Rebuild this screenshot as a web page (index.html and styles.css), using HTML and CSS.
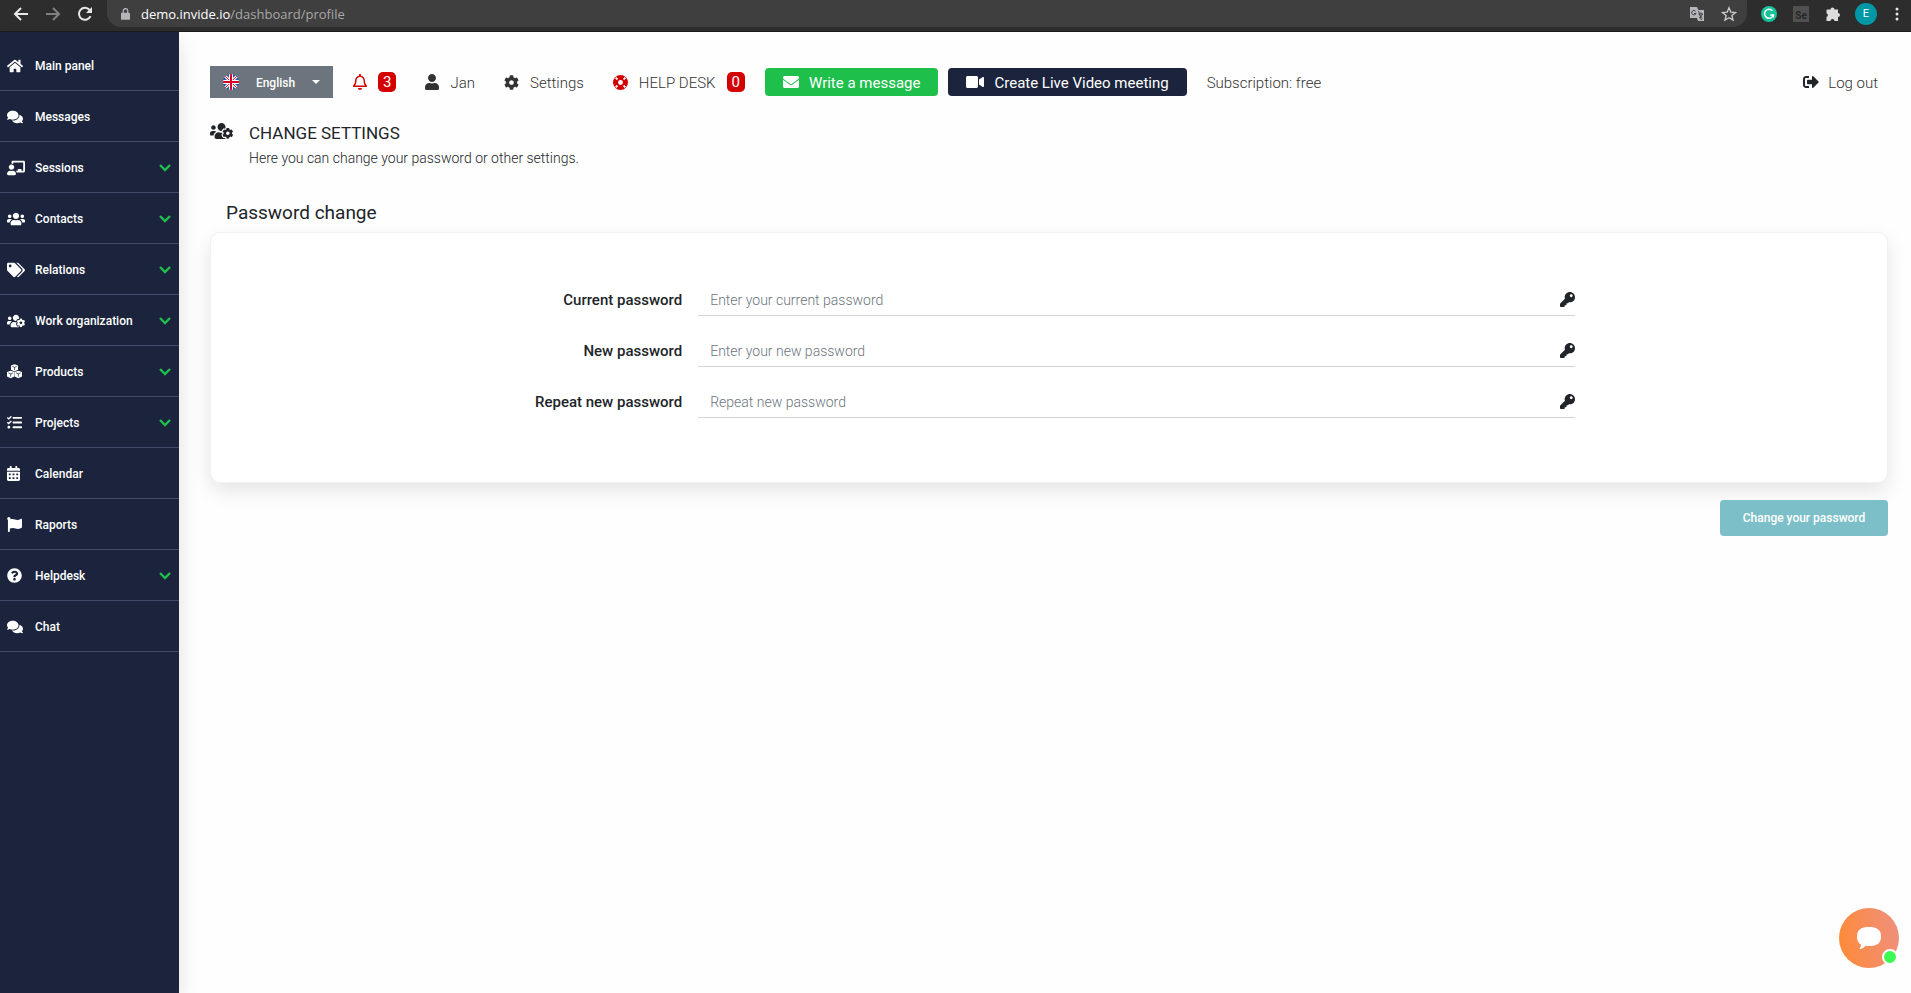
FILE: index.html
```html
<!DOCTYPE html>
<html lang="en">
<head>
    <meta charset="UTF-8">
    <meta name="viewport" content="width=device-width, initial-scale=1.0">
    <title>Change settings</title>
    <link rel="stylesheet" href="styles.css">
</head>
<body>
    <!-- icons -->
    <svg class="sprite" aria-hidden="true">
        <symbol id="home" viewBox="0 0 576 512"><path d="M280.37 148.26L96 300.11V464a16 16 0 0 0 16 16l112.06-.29a16 16 0 0 0 15.92-16V368a16 16 0 0 1 16-16h64a16 16 0 0 1 16 16v95.64a16 16 0 0 0 16 16.05L464 480a16 16 0 0 0 16-16V300L295.67 148.26a12.19 12.19 0 0 0-15.3 0zM571.6 251.47L488 182.56V44.05a12 12 0 0 0-12-12h-56a12 12 0 0 0-12 12v72.61L318.47 43a48 48 0 0 0-61 0L4.34 251.47a12 12 0 0 0-1.6 16.9l25.5 31A12 12 0 0 0 45.15 301l235.22-193.74a12.19 12.19 0 0 1 15.3 0L530.9 301a12 12 0 0 0 16.9-1.6l25.5-31a12 12 0 0 0-1.7-16.93z"/></symbol>
        <symbol id="comments" viewBox="0 0 576 512"><path d="M416 192c0-88.4-93.1-160-208-160S0 103.6 0 192c0 34.3 14.1 65.9 38 92-13.4 30.2-35.5 54.2-35.8 54.5-2.2 2.3-2.8 5.7-1.5 8.7S4.8 352 8 352c36.6 0 66.9-12.3 88.7-25 32.2 15.7 70.3 25 111.3 25 114.9 0 208-71.6 208-160zm122 220c23.9-26 38-57.7 38-92 0-66.9-53.5-124.2-129.3-148.1.9 6.6 1.3 13.3 1.3 20.1 0 105.9-107.7 192-240 192-10.8 0-21.3-.8-31.7-1.9C207.8 439.6 281.8 480 368 480c41 0 79.1-9.2 111.3-25 21.8 12.7 52.1 25 88.7 25 3.2 0 6.1-1.9 7.3-4.8 1.3-2.9.7-6.3-1.5-8.7-.3-.3-22.4-24.2-35.8-54.5z"/></symbol>
        <symbol id="teacher" viewBox="0 0 640 512"><path d="M208 352c-2.39 0-4.78.35-7.06 1.09C187.98 357.3 174.35 360 160 360c-14.35 0-27.98-2.7-40.95-6.91-2.28-.74-4.66-1.09-7.05-1.09C49.94 352-.33 402.48 0 464.62.14 490.88 21.73 512 48 512h224c26.27 0 47.86-21.12 48-47.38.33-62.14-49.94-112.62-112-112.62zm-48-32c53.02 0 96-42.98 96-96s-42.98-96-96-96-96 42.98-96 96 42.98 96 96 96zM592 0H208c-26.47 0-48 22.25-48 49.59V96c23.42 0 45.1 6.78 64 17.8V64h352v288h-64v-64H384v64h-76.24c19.1 16.69 33.12 38.73 39.69 64H592c26.47 0 48-22.25 48-49.59V49.59C640 22.25 618.47 0 592 0z"/></symbol>
        <symbol id="users" viewBox="0 0 640 512"><path d="M96 224c35.3 0 64-28.7 64-64s-28.7-64-64-64-64 28.7-64 64 28.7 64 64 64zm448 0c35.3 0 64-28.7 64-64s-28.7-64-64-64-64 28.7-64 64 28.7 64 64 64zm32 32h-64c-17.6 0-33.5 7.1-45.1 18.6 40.3 22.1 68.9 62 75.1 109.4h66c17.7 0 32-14.3 32-32v-32c0-35.3-28.7-64-64-64zm-256 0c61.9 0 112-50.1 112-112S381.9 32 320 32 208 82.1 208 144s50.1 112 112 112zm76.8 32h-8.3c-20.8 10-43.9 16-68.5 16s-47.6-6-68.5-16h-8.3C179.6 288 128 339.6 128 403.2V432c0 26.5 21.5 48 48 48h288c26.5 0 48-21.5 48-48v-28.8c0-63.6-51.6-115.2-115.2-115.2zm-223.7-13.4C161.5 263.1 145.6 256 128 256H64c-35.3 0-64 28.7-64 64v32c0 17.7 14.3 32 32 32h65.9c6.3-47.4 34.9-87.3 75.2-109.4z"/></symbol>
        <symbol id="tags" viewBox="0 0 640 512"><path d="M497.941 225.941L286.059 14.059A48 48 0 0 0 252.118 0H48C21.49 0 0 21.49 0 48v204.118a48 48 0 0 0 14.059 33.941l211.882 211.882c18.744 18.745 49.136 18.746 67.882 0l204.118-204.118c18.745-18.745 18.745-49.137 0-67.882zM112 160c-26.51 0-48-21.49-48-48s21.49-48 48-48 48 21.49 48 48-21.49 48-48 48zm513.941 133.823L421.823 497.941c-18.745 18.745-49.137 18.745-67.882 0l-.36-.36L527.64 323.522c16.999-16.999 26.36-39.6 26.36-63.64s-9.362-46.641-26.36-63.64L331.397 0h48.721a48 48 0 0 1 33.941 14.059l211.882 211.882c18.745 18.745 18.745 49.137 0 67.882z"/></symbol>
        <symbol id="users-cog" viewBox="0 0 640 512"><path d="M610.5 341.3c2.6-14.1 2.6-28.5 0-42.6l25.8-14.9c3-1.7 4.3-5.2 3.3-8.5-6.7-21.6-18.2-41.2-33.2-57.4-2.3-2.5-6-3.1-9-1.4l-25.8 14.9c-10.9-9.3-23.4-16.5-36.9-21.3v-29.8c0-3.4-2.4-6.4-5.7-7.1-22.3-5-45-4.8-66.2 0-3.3.7-5.7 3.7-5.7 7.1v29.8c-13.5 4.8-26 12-36.9 21.3l-25.8-14.9c-2.9-1.7-6.7-1.1-9 1.4-15 16.2-26.5 35.8-33.2 57.4-1 3.3.4 6.8 3.3 8.5l25.8 14.9c-2.6 14.1-2.6 28.5 0 42.6l-25.8 14.9c-3 1.7-4.3 5.2-3.3 8.5 6.7 21.6 18.2 41.1 33.2 57.4 2.3 2.5 6 3.1 9 1.4l25.8-14.9c10.9 9.3 23.4 16.5 36.9 21.3v29.8c0 3.4 2.4 6.4 5.7 7.1 22.3 5 45 4.8 66.2 0 3.3-.7 5.7-3.7 5.7-7.1v-29.8c13.5-4.8 26-12 36.9-21.3l25.8 14.9c2.9 1.7 6.7 1.1 9-1.4 15-16.2 26.5-35.8 33.2-57.4 1-3.3-.4-6.8-3.3-8.5l-25.8-14.9zM496 368.5c-26.8 0-48.5-21.8-48.5-48.5s21.8-48.5 48.5-48.5 48.5 21.8 48.5 48.5-21.7 48.5-48.5 48.5zM96 224c35.3 0 64-28.7 64-64s-28.7-64-64-64-64 28.7-64 64 28.7 64 64 64zm224 32c1.9 0 3.7-.5 5.6-.6 8.3-21.7 20.5-42.1 36.3-59.2 7.4-8 17.9-12.6 28.9-12.6 6.9 0 13.7 1.8 19.6 5.3l7.9 4.6c.8-.5 1.6-.9 2.4-1.4 7-14.6 11.2-30.8 11.2-48 0-61.9-50.1-112-112-112S208 82.1 208 144c0 61.9 50.1 112 112 112zm105.2 194.5c-2.3-1.2-4.6-2.6-6.8-3.9-8.2 4.8-15.3 9.8-27.5 9.8-10.9 0-21.4-4.6-28.9-12.6-18.3-19.8-32.3-43.9-40.2-69.6-10.7-34.5 24.9-49.7 25.8-50.3-.1-2.6-.1-5.2 0-7.8l-7.9-4.6c-3.8-2.2-7-5-9.8-8.1-3.3.2-6.5.6-9.8.6-24.6 0-47.6-6-68.5-16h-8.3C179.6 288 128 339.6 128 403.2V432c0 26.5 21.5 48 48 48h255.4c-3.7-6-6.2-12.8-6.2-20.3v-9.2zM173.1 274.6C161.5 263.1 145.6 256 128 256H64c-35.3 0-64 28.7-64 64v32c0 17.7 14.3 32 32 32h65.9c6.3-47.4 34.9-87.3 75.2-109.4z"/></symbol>
        <symbol id="cubes" viewBox="0 0 512 512">
            <path d="M256 10l120 44v146l-120 56-120-56V54zM126 228l124 48v152l-124 62L0 428V276zM386 228l126 48v152l-126 62-124-62V276z"/>
            <path d="M180 84l76 30 76-30M256 114v90M46 304l80 32 80-32M126 336v96M306 304l80 32 80-32M386 336v96" fill="none" stroke="#1b243c" stroke-width="24"/>
        </symbol>
        <symbol id="tasks" viewBox="0 0 512 512"><path d="M139.61 35.5a12 12 0 0 0-17 0L58.93 98.81l-22.7-22.12a12 12 0 0 0-17 0L3.53 92.41a12 12 0 0 0 0 17l47.59 47.4a12.78 12.78 0 0 0 17.61 0l15.59-15.62L156.52 69a12.09 12.09 0 0 0 .09-17zm0 159.19a12 12 0 0 0-17 0l-63.68 63.72-22.7-22.1a12 12 0 0 0-17 0L3.53 252a12 12 0 0 0 0 17L51 316.5a12.77 12.77 0 0 0 17.6 0l15.7-15.69 72.2-72.22a12 12 0 0 0 .09-16.9zM64 368c-26.49 0-48.59 21.5-48.59 48S37.53 464 64 464a48 48 0 0 0 0-96zm432 16H208a16 16 0 0 0-16 16v32a16 16 0 0 0 16 16h288a16 16 0 0 0 16-16v-32a16 16 0 0 0-16-16zm0-320H208a16 16 0 0 0-16 16v32a16 16 0 0 0 16 16h288a16 16 0 0 0 16-16V80a16 16 0 0 0-16-16zm0 160H208a16 16 0 0 0-16 16v32a16 16 0 0 0 16 16h288a16 16 0 0 0 16-16v-32a16 16 0 0 0-16-16z"/></symbol>
        <symbol id="calendar" viewBox="0 0 448 512"><path fill-rule="evenodd" d="M0 464c0 26.5 21.5 48 48 48h352c26.5 0 48-21.5 48-48V192H0zM64 256h64v64H64zM192 256h64v64h-64zM320 256h64v64h-64zM64 384h64v64H64zM192 384h64v64h-64zM320 384h64v64h-64zM400 64h-48V16c0-8.8-7.2-16-16-16h-32c-8.8 0-16 7.2-16 16v48H160V16c0-8.8-7.2-16-16-16h-32c-8.8 0-16 7.2-16 16v48H48C21.5 64 0 85.5 0 112v48h448v-48c0-26.5-21.5-48-48-48z"/></symbol>
        <symbol id="flag" viewBox="0 0 512 512"><path d="M349.565 98.783C295.978 98.783 251.721 64 184.348 64c-24.955 0-47.309 4.384-68.045 12.013a55.947 55.947 0 0 0 3.586-23.562C118.117 24.015 94.806 1.206 66.338.048 34.345-1.254 8 24.296 8 56c0 19.026 9.497 35.825 24 45.945V488c0 13.255 10.745 24 24 24h16c13.255 0 24-10.745 24-24v-94.4c28.311-12.064 63.582-22.122 114.435-22.122 53.588 0 97.844 34.783 165.217 34.783 48.169 0 86.667-16.294 122.505-40.858C506.84 359.452 512 349.571 512 339.045v-243.1c0-23.393-24.269-38.87-45.485-29.016-34.338 15.948-76.454 31.854-116.95 31.854z"/></symbol>
        <symbol id="question" viewBox="0 0 512 512"><path d="M504 256c0 136.997-111.043 248-248 248S8 392.997 8 256C8 119.083 119.043 8 256 8s248 111.083 248 248zM262.655 90c-54.497 0-89.255 22.957-116.549 63.758-3.536 5.286-2.353 12.415 2.715 16.258l34.699 26.31c5.205 3.947 12.621 3.008 16.665-2.122 17.864-22.658 30.113-35.797 57.303-35.797 20.429 0 45.698 13.148 45.698 32.958 0 14.976-12.363 22.667-32.534 33.976C247.128 238.528 216 254.941 216 296v4c0 6.627 5.373 12 12 12h56c6.627 0 12-5.373 12-12v-1.333c0-28.462 83.186-29.647 83.186-106.667 0-58.002-60.165-102-116.531-102zM256 338c-25.365 0-46 20.635-46 46 0 25.364 20.635 46 46 46s46-20.636 46-46c0-25.365-20.635-46-46-46z"/></symbol>
        <symbol id="chevron" viewBox="0 0 12 8"><path d="M1 1l5 5 5-5" fill="none" stroke="currentColor" stroke-width="2.4"/></symbol>
        <symbol id="bell" viewBox="0 0 448 512"><path d="M439.39 362.29c-19.32-20.76-55.47-51.99-55.47-154.29 0-77.7-54.48-139.9-127.94-155.16V32c0-17.67-14.32-32-31.98-32s-31.98 14.33-31.98 32v20.84C118.56 68.1 64.08 130.3 64.08 208c0 102.3-36.15 133.53-55.47 154.29-6 6.45-8.66 14.16-8.61 21.71.11 16.4 12.98 32 32.1 32h383.8c19.12 0 32-15.6 32.1-32 .05-7.55-2.61-15.27-8.61-21.71zM67.53 368c21.22-27.97 44.42-74.33 44.53-159.42 0-.2-.06-.38-.06-.58 0-61.86 50.14-112 112-112s112 50.14 112 112c0 .2-.06.38-.06.58.11 85.1 23.31 131.46 44.53 159.42H67.53zM224 512c35.32 0 63.97-28.65 63.97-64H160.03c0 35.35 28.65 64 63.97 64z"/></symbol>
        <symbol id="user" viewBox="0 0 448 512"><path d="M224 256c70.7 0 128-57.3 128-128S294.7 0 224 0 96 57.3 96 128s57.3 128 128 128zm89.6 32h-16.7c-22.2 10.2-46.9 16-72.9 16s-50.6-5.8-72.9-16h-16.7C60.2 288 0 348.2 0 422.4V464c0 26.5 21.5 48 48 48h352c26.5 0 48-21.5 48-48v-41.6c0-74.2-60.2-134.4-134.4-134.4z"/></symbol>
        <symbol id="cog" viewBox="0 0 512 512"><path d="M487.4 315.7l-42.6-24.6c4.3-23.2 4.3-47 0-70.2l42.6-24.6c4.9-2.8 7.1-8.6 5.5-14-11.1-35.6-30-67.8-54.7-94.6-3.8-4.1-10-5.1-14.8-2.3L380.8 110c-17.9-15.4-38.5-27.3-60.8-35.1V25.8c0-5.6-3.9-10.5-9.4-11.7-36.7-8.2-74.3-7.8-109.2 0-5.5 1.2-9.4 6.1-9.4 11.7V75c-22.2 7.9-42.8 19.8-60.8 35.1L88.7 85.5c-4.9-2.8-11-1.9-14.8 2.3-24.7 26.7-43.6 58.9-54.7 94.6-1.7 5.4.6 11.2 5.5 14L67.3 221c-4.3 23.2-4.3 47 0 70.2l-42.6 24.6c-4.9 2.8-7.1 8.6-5.5 14 11.1 35.6 30 67.8 54.7 94.6 3.8 4.1 10 5.1 14.8 2.3l42.6-24.6c17.9 15.4 38.5 27.3 60.8 35.1v49.2c0 5.6 3.9 10.5 9.4 11.7 36.7 8.2 74.3 7.8 109.2 0 5.5-1.2 9.4-6.1 9.4-11.7v-49.2c22.2-7.9 42.8-19.8 60.8-35.1l42.6 24.6c4.9 2.8 11 1.9 14.8-2.3 24.7-26.7 43.6-58.9 54.7-94.6 1.5-5.5-.7-11.3-5.6-14.1zM256 336c-44.1 0-80-35.9-80-80s35.9-80 80-80 80 35.9 80 80-35.9 80-80 80z"/></symbol>
        <symbol id="ring" viewBox="0 0 16 16">
            <circle cx="8" cy="8" r="8"/>
            <path d="M2.8 2.8l10.4 10.4M13.2 2.8L2.8 13.2" stroke="#fff" stroke-width="2"/>
            <circle cx="8" cy="8" r="4.6"/>
            <circle cx="8" cy="8" r="2.6" fill="#fff"/>
        </symbol>
        <symbol id="envelope" viewBox="0 0 512 512"><path d="M502.3 190.8c3.9-3.1 9.7-.2 9.7 4.7V400c0 26.5-21.5 48-48 48H48c-26.5 0-48-21.5-48-48V195.6c0-5 5.7-7.8 9.7-4.7 22.4 17.4 52.1 39.5 154.1 113.6 21.1 15.4 56.7 47.8 92.2 47.6 35.7.3 72-32.8 92.3-47.6 102-74.1 131.6-96.3 154-113.7zM256 320c23.2.4 56.6-29.2 73.4-41.4 132.7-96.3 142.8-104.7 173.4-128.7 5.8-4.5 9.2-11.5 9.2-18.9v-19c0-26.5-21.5-48-48-48H48c-26.5 0-48 21.5-48 48v19c0 7.4 3.4 14.3 9.2 18.9 30.6 23.9 40.7 32.4 173.4 128.7 16.8 12.2 50.2 41.8 73.4 41.4z"/></symbol>
        <symbol id="video" viewBox="0 0 576 512"><path d="M336.2 64H47.8C21.4 64 0 85.4 0 111.8v288.4C0 426.6 21.4 448 47.8 448h288.4c26.4 0 47.8-21.4 47.8-47.8V111.8c0-26.4-21.4-47.8-47.8-47.8zm189.4 37.7L416 177.3v157.4l109.6 75.5c21.2 14.6 50.4-.3 50.4-25.8V127.5c0-25.4-29.1-40.4-50.4-25.8z"/></symbol>
        <symbol id="logout" viewBox="0 0 512 512"><path d="M497 273L329 441c-15 15-41 4.5-41-17v-96H152c-13.3 0-24-10.7-24-24v-96c0-13.3 10.7-24 24-24h136V88c0-21.4 25.9-32 41-17l168 168c9.3 9.4 9.3 24.6 0 34zM192 436v-40c0-6.6-5.4-12-12-12H96c-17.7 0-32-14.3-32-32V160c0-17.7 14.3-32 32-32h84c6.6 0 12-5.4 12-12V76c0-6.6-5.4-12-12-12H96c-53 0-96 43-96 96v192c0 53 43 96 96 96h84c6.6 0 12-5.4 12-12z"/></symbol>
        <symbol id="key" viewBox="0 0 512 512"><path d="M512 176.001C512 273.203 433.202 352 336 352c-11.22 0-22.19-1.062-32.827-3.069l-24.012 27.014A23.999 23.999 0 0 1 261.223 384H224v40c0 13.255-10.745 24-24 24h-40v40c0 13.255-10.745 24-24 24H24c-13.255 0-24-10.745-24-24v-78.059c0-6.365 2.529-12.47 7.029-16.971l161.802-161.802C163.108 213.814 160 195.271 160 176 160 78.798 238.797.001 335.999 0 433.488-.001 512 78.511 512 176.001zM336 128c0 26.51 21.49 48 48 48s48-21.49 48-48-21.49-48-48-48-48 21.49-48 48z"/></symbol>
    </svg>

    <div class="browser-bar">
        <div class="browser-nav">
            <button aria-label="Back"><svg viewBox="0 0 16 16"><path d="M15 8H2M8 2L2 8l6 6" fill="none" stroke="#e8e8e8" stroke-width="2"/></svg></button>
            <button aria-label="Forward"><svg viewBox="0 0 16 16"><path d="M1 8h13M8 2l6 6-6 6" fill="none" stroke="#808080" stroke-width="2"/></svg></button>
            <button aria-label="Reload"><svg viewBox="0 0 16 16"><path d="M13.5 10.2A6 6 0 1 1 12.6 4" fill="none" stroke="#e8e8e8" stroke-width="2"/><path d="M15 1v6H9z" fill="#e8e8e8"/></svg></button>
        </div>
        <div class="address">
            <svg class="lock" viewBox="0 0 10 13"><path d="M1 5h8a1 1 0 0 1 1 1v6a1 1 0 0 1-1 1H1a1 1 0 0 1-1-1V6a1 1 0 0 1 1-1z" fill="#b4b7ba"/><path d="M2.5 6V3a2.5 2.5 0 0 1 5 0v3" fill="none" stroke="#b4b7ba" stroke-width="1.4"/></svg>
            <span class="url"><b>demo.invide.io</b>/dashboard/profile</span>
            <svg class="translate" viewBox="0 0 16 16"><path d="M1 1h7l1.4 3H15v11H9l-1-3H1z" fill="#b4b7ba"/><path d="M6.6 5.2A2.2 2.2 0 1 0 7 7.5H5M9.6 5l2.8 9M9.5 8h4.5M12 6.5V8M13.2 8c-.4 2-1.6 3-3 4M10.8 9.5l2.6 2.5" fill="none" stroke="#3f3f3f" stroke-width="1"/></svg>
            <svg class="star" viewBox="0 0 16 16"><path d="M8 1.8l1.8 4.3 4.7.4-3.6 3 1.1 4.6-4-2.4-4 2.4 1.1-4.6-3.6-3 4.7-.4z" fill="none" stroke="#c8c8c8" stroke-width="1.4"/></svg>
        </div>
        <div class="extensions">
            <svg viewBox="0 0 16 16"><circle cx="8" cy="8" r="8" fill="#15c39a"/><path d="M11.5 4.8A4.5 4.5 0 1 0 12.4 9H9.2M12.4 8.5v3" fill="none" stroke="#fff" stroke-width="1.5"/></svg>
            <span class="selenium">Se</span>
            <svg viewBox="0 0 16 16"><path d="M2 3.5h3.5a2 2 0 0 1 4 0H13V7a2 2 0 0 1 0 4v4H9.500a2 2 0 0 0-4 0h-4v-4a2 2 0 0 0 0-3.800V4z" fill="#dcdcdc"/></svg>
            <span class="avatar">E</span>
            <button class="more" aria-label="Menu"><svg viewBox="0 0 4 14"><circle cx="2" cy="2" r="1.5"/><circle cx="2" cy="7" r="1.5"/><circle cx="2" cy="12" r="1.5"/></svg></button>
        </div>
    </div>

    <div class="page">
        <nav class="sidebar">
            <a href="#"><svg class="w16"><use href="#home"/></svg><span>Main panel</span></a>
            <a href="#"><svg class="w16"><use href="#comments"/></svg><span>Messages</span></a>
            <a href="#"><svg class="w18"><use href="#teacher"/></svg><span>Sessions</span><svg class="chevron"><use href="#chevron"/></svg></a>
            <a href="#"><svg class="w18"><use href="#users"/></svg><span>Contacts</span><svg class="chevron"><use href="#chevron"/></svg></a>
            <a href="#"><svg class="w18"><use href="#tags"/></svg><span>Relations</span><svg class="chevron"><use href="#chevron"/></svg></a>
            <a href="#"><svg class="w18"><use href="#users-cog"/></svg><span>Work organization</span><svg class="chevron"><use href="#chevron"/></svg></a>
            <a href="#"><svg class="w15"><use href="#cubes"/></svg><span>Products</span><svg class="chevron"><use href="#chevron"/></svg></a>
            <a href="#"><svg class="w15"><use href="#tasks"/></svg><span>Projects</span><svg class="chevron"><use href="#chevron"/></svg></a>
            <a href="#"><svg class="w13"><use href="#calendar"/></svg><span>Calendar</span></a>
            <a href="#"><svg class="w15"><use href="#flag"/></svg><span>Raports</span></a>
            <a href="#"><svg class="w15"><use href="#question"/></svg><span>Helpdesk</span><svg class="chevron"><use href="#chevron"/></svg></a>
            <a href="#"><svg class="w16"><use href="#comments"/></svg><span>Chat</span></a>
        </nav>

        <main>
            <header class="topbar">
                <button class="language">
                    <svg class="uk" viewBox="0 0 16 16">
                        <clipPath id="round"><circle cx="8" cy="8" r="8"/></clipPath>
                        <g clip-path="url(#round)">
                            <path d="M0 0h16v16H0z" fill="#2159a8"/>
                            <path d="M0 0l16 16M16 0L0 16" stroke="#fff" stroke-width="3"/>
                            <path d="M0 0l16 16M16 0L0 16" stroke="#d80027" stroke-width="1"/>
                            <path d="M8 0v16M0 8h16" stroke="#fff" stroke-width="4"/>
                            <path d="M8 0v16M0 8h16" stroke="#d80027" stroke-width="2"/>
                        </g>
                    </svg>
                    <span>English</span>
                    <i class="caret"></i>
                </button>
                <a class="top-link alerts" href="#"><svg class="w14 red"><use href="#bell"/></svg><span class="badge">3</span></a>
                <a class="top-link" href="#"><svg class="w14"><use href="#user"/></svg><span>Jan</span></a>
                <a class="top-link" href="#"><svg class="w15"><use href="#cog"/></svg><span>Settings</span></a>
                <a class="top-link" href="#"><svg class="w15 red"><use href="#ring"/></svg><span>HELP DESK</span><span class="badge">0</span></a>
                <button class="btn btn-green"><svg class="w16"><use href="#envelope"/></svg><span>Write a message</span></button>
                <button class="btn btn-navy"><svg class="w18"><use href="#video"/></svg><span>Create Live Video meeting</span></button>
                <span class="plan">Subscription: free</span>
                <a class="top-link logout" href="#"><svg class="w16"><use href="#logout"/></svg><span>Log out</span></a>
            </header>

            <section class="title">
                <svg><use href="#users-cog"/></svg>
                <div>
                    <h1>CHANGE SETTINGS</h1>
                    <p>Here you can change your password or other settings.</p>
                </div>
            </section>

            <h2>Password change</h2>
            <form>
                <div class="card">
                    <div class="row">
                        <label for="current">Current password</label>
                        <div class="field"><input type="password" id="current" placeholder="Enter your current password"><svg class="w15"><use href="#key"/></svg></div>
                    </div>
                    <div class="row">
                        <label for="new">New password</label>
                        <div class="field"><input type="password" id="new" placeholder="Enter your new password"><svg class="w15"><use href="#key"/></svg></div>
                    </div>
                    <div class="row">
                        <label for="repeat">Repeat new password</label>
                        <div class="field"><input type="password" id="repeat" placeholder="Repeat new password"><svg class="w15"><use href="#key"/></svg></div>
                    </div>
                </div>
                <button class="save" disabled>Change your password</button>
            </form>
        </main>
    </div>

    <button class="chat" aria-label="Open chat">
        <svg viewBox="0 0 24 22"><path d="M12 0c8 0 12 2.500 12 9.500S20 19 12 19c-1.500 0-2.500 0-3.500-.2C7 20.500 5 22 3 22c-.6 0-.5-.5-.2-.9.8-.9 1.200-2 1.200-3.400C1.200 16 0 13.500 0 9.500 0 2.500 4 0 12 0z" fill="#fff"/></svg>
        <i class="online"></i>
    </button>
</body>
</html>
```

FILE: styles.css
```css
* {
    box-sizing: border-box;
}

body {
    margin: 0;
    min-height: 100vh;
    display: flex;
    flex-direction: column;
    background: #fefefe;
    color: #212529;
    font-family: Roboto, "Liberation Sans", sans-serif;
    font-size: 15px;
}

button {
    font-family: inherit;
    border: none;
    padding: 0;
    background: none;
    cursor: pointer;
}

a {
    color: inherit;
    text-decoration: none;
}

svg {
    display: block;
    flex: none;
    fill: currentColor;
}

.sprite {
    display: none;
}

/* icon widths */
.w13 { width: 13px; height: 15px; }
.w14 { width: 14px; height: 16px; }
.w15 { width: 15px; height: 15px; }
.w16 { width: 16px; height: 16px; }
.w18 { width: 18px; height: 16px; }

/* browser */
.browser-bar {
    height: 32px;
    display: flex;
    padding-bottom: 4px;
    background: #2d2d2d;
    border-bottom: 1px solid #1c1c1c;
}

.browser-nav {
    width: 107px;
    display: flex;
    align-items: center;
    gap: 16px;
    padding-left: 13px;
}

.browser-nav svg {
    width: 16px;
    height: 16px;
}

.address {
    flex: 1;
    display: flex;
    align-items: center;
    padding: 0 10px 0 14px;
    background: #3f3f3f;
    border-radius: 0 0 14px 14px;
}

.lock {
    width: 9px;
    height: 12px;
}

.url {
    flex: 1;
    margin-left: 11px;
    font-family: "Open Sans", sans-serif;
    font-size: 13px;
    line-height: 18px;
    color: #a8a8a8;
}

.url b {
    font-weight: 400;
    color: #fff;
}

.translate,
.star {
    width: 16px;
    height: 16px;
    margin-left: 16px;
}

.extensions {
    display: flex;
    align-items: center;
    gap: 16px;
    padding: 0 10px 0 14px;
}

.extensions svg {
    width: 16px;
    height: 16px;
}

.selenium {
    width: 16px;
    height: 16px;
    background: #505050;
    color: #262626;
    font-size: 10px;
    font-weight: 700;
    line-height: 20px;
    text-align: center;
}

.avatar {
    width: 22px;
    height: 22px;
    margin-left: -2px;
    border-radius: 50%;
    background: #0097a7;
    color: #fff;
    font-size: 11px;
    line-height: 22px;
    text-align: center;
}

.extensions .more svg {
    width: 8px;
    height: 14px;
    fill: #e8e8e8;
}

.page {
    flex: 1;
    display: flex;
}

/* sidebar */
.sidebar {
    flex: none;
    width: 179px;
    padding-top: 8px;
    background: #1b243c;
    box-shadow: 0 10px 20px rgba(0, 0, 0, 0.12);
}

.sidebar a {
    height: 51px;
    display: grid;
    grid-template-columns: 28px 1fr 12px;
    align-items: center;
    padding: 1px 8px 0 7px;
    border-bottom: 1px solid #404c69;
    color: #fff;
    font-size: 12px;
    font-weight: 500;
}

.sidebar span {
    padding-top: 1px;
}

.sidebar .chevron {
    width: 12px;
    height: 8px;
    color: #1fbf4c;
}

/* content */
main {
    flex: 1;
    padding: 34px 23px 40px 31px;
}

.topbar {
    display: flex;
    align-items: center;
    height: 32px;
    font-weight: 300;
}

.topbar span {
    padding-top: 1px;
}

.language {
    width: 123px;
    height: 32px;
    display: flex;
    align-items: center;
    padding: 0 13px;
    background: #6c757d;
    color: #fff;
    font-size: 12px;
    font-weight: 500;
}

.language span {
    margin: 0 auto;
}

.uk {
    width: 16px;
    height: 16px;
}

.caret {
    border: 4px solid transparent;
    border-top-color: #fff;
    border-bottom: none;
}

.top-link {
    display: flex;
    align-items: center;
    gap: 11px;
    margin-left: 29px;
    color: #333;
    white-space: nowrap;
}

.alerts {
    margin-left: 20px;
}

.red {
    color: #d40000;
}

.topbar .badge {
    padding: 0 5px;
    border-radius: 5px;
    background: #d40000;
    color: #fff;
    font-weight: 400;
    line-height: 20px;
}

.btn {
    height: 28px;
    display: flex;
    align-items: center;
    gap: 10px;
    padding: 0 18px;
    border-radius: 4px;
    color: #fff;
    font-size: 15px;
    white-space: nowrap;
}

.btn-green {
    margin-left: 20px;
    background: #1fbf4c;
}

.btn-navy {
    margin-left: 10px;
    background: #1b243c;
}

.plan {
    margin-left: 20px;
    color: #333;
    white-space: nowrap;
}

.logout {
    margin-left: auto;
    padding-right: 10px;
    gap: 9px;
}

.logout svg {
    color: #212529;
}

.title {
    display: flex;
    gap: 16px;
    margin-top: 22px;
}

.title svg {
    width: 23px;
    height: 22px;
}

h1 {
    margin: 0;
    font-size: 17px;
    font-weight: 400;
    line-height: 26px;
}

.title p {
    margin: 2px 0 0;
    font-size: 14px;
    font-weight: 300;
    line-height: 20px;
}

h2 {
    margin: 32px 16px 6px;
    font-size: 19px;
    font-weight: 400;
    line-height: 26px;
}

.card {
    display: grid;
    gap: 15px;
    padding: 47px 0 64px;
    border: 1px solid #f1f1f1;
    border-radius: 10px;
    background: #fff;
    box-shadow: 0 8px 20px rgba(0, 0, 0, 0.1);
}

.row {
    display: grid;
    grid-template-columns: 25fr 45fr 16fr;
    align-items: center;
}

.row label {
    padding: 3px 16px 0 0;
    font-size: 15px;
    font-weight: 500;
    text-align: right;
}

.field {
    height: 36px;
    display: flex;
    align-items: center;
    padding-top: 4px;
    border-bottom: 1px solid #d4d4d4;
}

.field input {
    flex: 1;
    padding: 0 12px;
    border: none;
    outline: none;
    background: none;
    font-family: inherit;
    font-size: 14px;
    font-weight: 300;
    line-height: 20px;
}

.field input::placeholder {
    color: #6c757d;
    opacity: 1;
}

.save {
    display: block;
    width: 168px;
    height: 36px;
    margin: 17px 0 0 auto;
    border-radius: 4px;
    background: #7dbfc9;
    color: #fff;
    font-size: 12px;
    font-weight: 500;
}

/* chat bubble */
.chat {
    position: fixed;
    right: 12px;
    bottom: 25px;
    width: 60px;
    height: 60px;
    display: flex;
    align-items: center;
    justify-content: center;
    border-radius: 50%;
    background: linear-gradient(80deg, #ff8a35, #ee9080);
}

.chat svg {
    width: 24px;
    height: 22px;
}

.online {
    position: absolute;
    right: 1px;
    bottom: 3px;
    width: 16px;
    height: 16px;
    border: 2px solid #fff;
    border-radius: 50%;
    background: #3dfa52;
}
```
